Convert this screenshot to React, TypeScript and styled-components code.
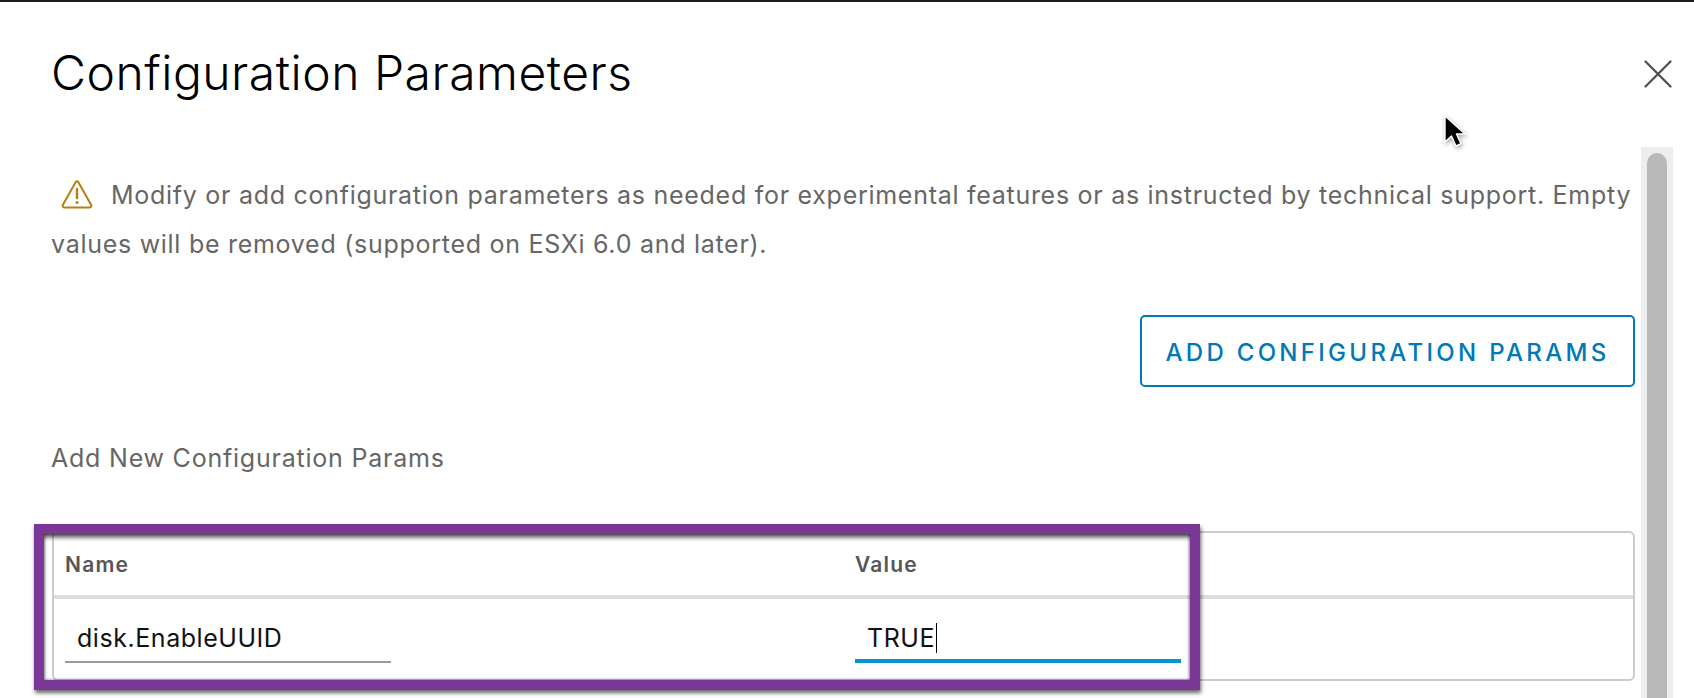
import React from 'react';
import styled, { createGlobalStyle } from 'styled-components';

const GlobalStyle = createGlobalStyle`
  html, body {
    margin: 0;
    padding: 0;
    height: 100%;
    background: #fff;
    overflow: hidden;
  }
  #root {
    height: 100%;
  }
`;

const Modal = styled.div`
  position: relative;
  box-sizing: border-box;
  width: 1694px;
  height: 698px;
  overflow: hidden;
  border-top: 2px solid #1b1b1b;
  background: #fff;
  font-family: Inter, 'Liberation Sans', sans-serif;
`;

const Header = styled.div`
  display: flex;
  align-items: flex-start;
  justify-content: space-between;
  height: 145px;
  padding: 41px 22px 0 51px;
  box-sizing: border-box;
`;

const Title = styled.h1`
  margin: 0;
  font-size: 48px;
  line-height: 60px;
  font-weight: 300;
  letter-spacing: 0.5px;
  color: #000;
`;

const CloseButton = styled.button`
  display: block;
  width: 28px;
  height: 28px;
  margin-top: 17px;
  padding: 0;
  border: 0;
  background: none;
  color: #4d4d4d;
`;

const Body = styled.div`
  display: flex;
  align-items: stretch;
  gap: 6px;
  height: 551px;
  padding: 0 21px 0 51px;
`;

const Content = styled.div`
  width: 1584px;
  flex: none;
`;

const Notice = styled.p`
  margin: 24px -8px 0 0;
  font-size: 25px;
  line-height: 49px;
  letter-spacing: 0.72px;
  color: #666;
`;

const WarnIcon = styled.svg`
  display: inline-block;
  width: 32px;
  height: 30px;
  margin: 0 18px 0 10px;
  vertical-align: -5px;
`;

const Actions = styled.div`
  display: flex;
  justify-content: flex-end;
  margin-top: 46px;
`;

const OutlineButton = styled.button`
  box-sizing: border-box;
  width: 495px;
  height: 72px;
  padding: 2px 0 0;
  border: 2px solid #0079b8;
  border-radius: 5px;
  background: #fff;
  color: #0079b8;
  font-family: inherit;
  font-size: 24px;
  font-weight: 500;
  letter-spacing: 3.3px;
`;

const SectionLabel = styled.div`
  margin-top: 56px;
  font-size: 25px;
  line-height: 30px;
  letter-spacing: 0.78px;
  color: #666;
`;

const TableBox = styled.div`
  position: relative;
  box-sizing: border-box;
  height: 150px;
  margin-top: 58px;
  margin-left: 1px;
  border: 2px solid #ccc;
  border-radius: 6px;
`;

const HeadRow = styled.div`
  display: grid;
  grid-template-columns: 790px 1fr;
  box-sizing: border-box;
  height: 66px;
  padding: 19px 11px 0;
  border-bottom: 4px solid #ddd;
`;

const HeadCell = styled.div`
  font-size: 21px;
  line-height: 26px;
  font-weight: 600;
  letter-spacing: 1.2px;
  color: #565656;
`;

const DataRow = styled.div`
  display: grid;
  grid-template-columns: 790px 326px;
  padding: 20px 11px 0;
`;

const Field = styled.div<{ $active?: boolean; $width: number }>`
  box-sizing: border-box;
  width: ${(p) => p.$width}px;
  height: 44px;
  padding-left: 12px;
  font-size: 25px;
  line-height: 38px;
  letter-spacing: 0.55px;
  color: #111;
  border-bottom: ${(p) => (p.$active ? '4px solid #0095d3' : '2px solid #9a9a9a')};
`;

const Caret = styled.span`
  display: inline-block;
  width: 1px;
  height: 30px;
  margin-left: 1px;
  vertical-align: -6px;
  background: #000;
`;

const Highlight = styled.div`
  position: absolute;
  left: -20px;
  top: -9px;
  box-sizing: border-box;
  width: 1166px;
  height: 166px;
  border: 10px solid #7a3798;
  box-shadow: 1px 3px 4px rgba(0, 0, 0, 0.6), inset 0 5px 5px -2px rgba(0, 0, 0, 0.75),
    inset -2px 0 3px -1px rgba(0, 0, 0, 0.35), inset 2px 0 3px -1px rgba(0, 0, 0, 0.35),
    inset 0 -2px 3px -1px rgba(0, 0, 0, 0.2);
`;

const ScrollTrack = styled.div`
  width: 32px;
  flex: none;
  padding: 6px 6px 0;
  box-sizing: border-box;
  background: #eee;
`;

const ScrollThumb = styled.div`
  height: 100%;
  border-radius: 10px 10px 0 0;
  background: #b9b9b9;
`;

const Pointer = styled.svg`
  position: absolute;
  left: 1441px;
  top: 111px;
  width: 26px;
  height: 38px;
  filter: drop-shadow(1px 2px 2px rgba(0, 0, 0, 0.35));
`;

const App = () => (
  <Modal>
    <GlobalStyle />
    <Header>
      <Title>Configuration Parameters</Title>
      <CloseButton aria-label="Close">
        <svg viewBox="0 0 28 28" width="28" height="28">
          <path d="M1.5 1.5 26.5 26.5M26.5 1.5 1.5 26.5" fill="none" stroke="currentColor" strokeWidth="2.2" strokeLinecap="round" />
        </svg>
      </CloseButton>
    </Header>
    <Body>
      <Content>
        <Notice>
          <WarnIcon viewBox="0 0 32 30">
            <path
              d="M14.6 3.2a1.6 1.6 0 0 1 2.8 0L30.2 26a1.6 1.6 0 0 1-1.4 2.4H3.2A1.6 1.6 0 0 1 1.8 26Z"
              fill="none"
              stroke="#b5810e"
              strokeWidth="2"
              strokeLinejoin="round"
            />
            <path d="M16 10v9" stroke="#b5810e" strokeWidth="2.4" strokeLinecap="round" />
            <circle cx="16" cy="23.4" r="1.5" fill="#b5810e" />
          </WarnIcon>
          Modify or add configuration parameters as needed for experimental features or as instructed by technical support. Empty values will be removed (supported on ESXi 6.0 and later).
        </Notice>
        <Actions>
          <OutlineButton>ADD CONFIGURATION PARAMS</OutlineButton>
        </Actions>
        <SectionLabel>Add New Configuration Params</SectionLabel>
        <TableBox>
          <HeadRow>
            <HeadCell>Name</HeadCell>
            <HeadCell>Value</HeadCell>
          </HeadRow>
          <DataRow>
            <Field $width={326}>disk.EnableUUID</Field>
            <Field $width={326} $active>
              TRUE
              <Caret />
            </Field>
          </DataRow>
          <Highlight />
        </TableBox>
      </Content>
      <ScrollTrack>
        <ScrollThumb />
      </ScrollTrack>
    </Body>
    <Pointer viewBox="0 0 26 38">
      <path d="M4 3v26l6.5-6 4.5 10 5-2.4-4.6-9.6H24Z" fill="#000" stroke="#fff" strokeWidth="1.4" strokeLinejoin="round" />
    </Pointer>
  </Modal>
);

export default App;
